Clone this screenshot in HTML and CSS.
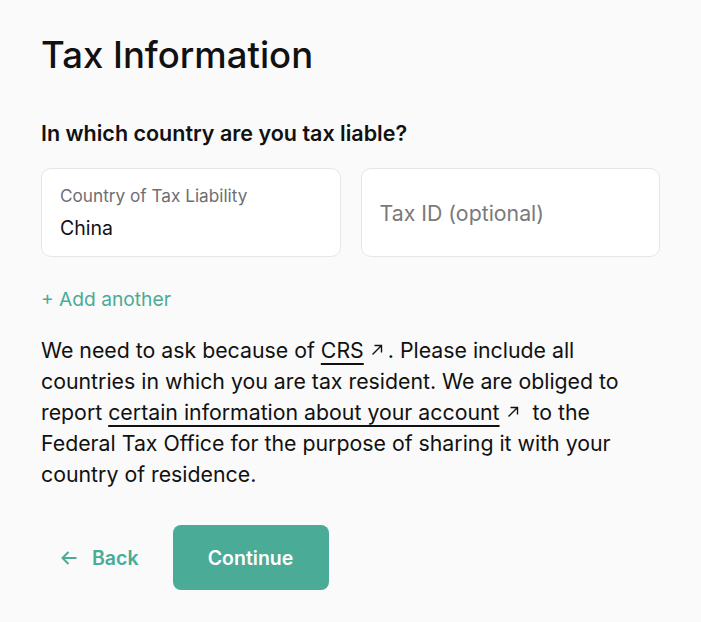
FILE: index.html
```html
<!DOCTYPE html>
<html>
    <head>
        <meta charset="utf-8">
        <title>Tax Information</title>
        <link rel="stylesheet" href="styles.css">
    </head>
    <body>
        <div class="page">
            <h1 class="title">Tax Information</h1>
            <h2 class="question">In which country are you tax liable?</h2>

            <div class="fields">
                <div class="field">
                    <label class="field-label">Country of Tax Liability</label>
                    <div class="field-value">China</div>
                </div>
                <div class="field field-empty">
                    <span class="placeholder">Tax ID (optional)</span>
                </div>
            </div>

            <a class="add-link" href="#">+ Add another</a>

            <p class="info">
                We need to ask because of <a href="#">CRS</a><svg class="ext" width="12" height="12" viewBox="0 0 12 12"><path d="M1.5 10.5L10.5 1.5M3.5 1.5H10.5V8.5" fill="none" stroke="#111" stroke-width="1.4"/></svg>. Please include all
                countries in which you are tax resident. We are obliged to
                report <a href="#">certain information about your account</a><svg class="ext ext-wide" width="12" height="12" viewBox="0 0 12 12"><path d="M1.5 10.5L10.5 1.5M3.5 1.5H10.5V8.5" fill="none" stroke="#111" stroke-width="1.4"/></svg> to the
                Federal Tax Office for the purpose of sharing it with your
                country of residence.
            </p>

            <div class="actions">
                <a class="back" href="#"><svg class="arrow" width="16" height="14" viewBox="0 0 16 14"><path d="M15.5 7H1.5M7.5 1L1.5 7l6 6" fill="none" stroke="#4aab96" stroke-width="2"/></svg>Back</a>
                <button class="continue" type="button">Continue</button>
            </div>
        </div>
    </body>
</html>
```

FILE: styles.css
```css
body {
    margin: 0;
    background: #fafafa;
    font-family: Inter, "Liberation Sans", sans-serif;
    color: #111;
}

.page {
    width: 619px;
    padding: 33px 0 0 41px;
}

.title {
    margin: 0;
    font-size: 36.5px;
    font-weight: 500;
    line-height: 44px;
}

.question {
    margin: 42px 0 0;
    font-size: 21.5px;
    font-weight: 600;
    line-height: 28px;
}

.fields {
    display: flex;
    gap: 20px;
    margin-top: 21px;
}

.field {
    flex: 1;
    height: 89px;
    box-sizing: border-box;
    background: #fff;
    border: 1px solid #e6e6e6;
    border-radius: 10px;
    padding: 15px 18px;
}

.field-empty {
    display: flex;
    align-items: center;
}

.field-label {
    display: block;
    font-size: 17.2px;
    color: #6e6e73;
    line-height: 24px;
}

.field-value {
    margin-top: 7px;
    font-size: 19.5px;
    line-height: 26px;
}

.placeholder {
    font-size: 21.3px;
    color: #7a7a7a;
}

.add-link {
    display: block;
    margin-top: 29px;
    font-size: 19.2px;
    line-height: 26px;
    color: #4aab96;
    text-decoration: none;
}

.info {
    margin: 23px 0 0;
    font-size: 21.3px;
    line-height: 31px;
}

.info a {
    color: inherit;
    text-decoration: underline;
    text-underline-offset: 5px;
    text-decoration-thickness: 2px;
}

.ext {
    margin: 0 5px 0 7px;
    vertical-align: 2px;
}

.ext-wide {
    margin-right: 8px;
}

.actions {
    display: flex;
    align-items: center;
    gap: 34px;
    margin-top: 35px;
}

.back {
    display: flex;
    align-items: center;
    padding-left: 20px;
    color: #4aab96;
    font-size: 19.5px;
    font-weight: 600;
    text-decoration: none;
}

.arrow {
    margin-right: 15px;
}

.continue {
    width: 156px;
    height: 65px;
    border: 0;
    border-radius: 8px;
    background: #4aab96;
    color: #fff;
    font-family: inherit;
    font-size: 19.5px;
    font-weight: 600;
}
```
